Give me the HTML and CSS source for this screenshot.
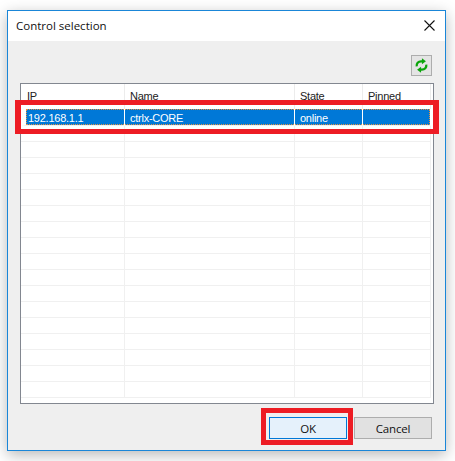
FILE: index.html
```html
<!DOCTYPE html>
<html lang="en">

<head>
  <meta charset="UTF-8">
  <title>Control selection</title>
  <link rel="stylesheet" href="styles.css">
</head>

<body>
  <div class="dialog">
    <div class="titlebar">
      <span class="title">Control selection</span>
      <svg class="close" width="11" height="11" viewBox="0 0 11 11">
        <path d="M0.5 0.5L10.5 10.5M10.5 0.5L0.5 10.5" stroke="#111" stroke-width="1.1" fill="none" />
      </svg>
    </div>
    <div class="content">
      <div class="toolbar">
        <button class="refresh">
          <svg width="13" height="15" viewBox="0 0 15 17">
            <path d="M2 9.5C1.4 6 3.8 3.6 7 3.6H9" stroke="#0aa50a" stroke-width="2.6" fill="none" />
            <path d="M8 0.2L12.6 3.7L8 7.2Z" fill="#0aa50a" />
            <path d="M13 7.5C13.6 11 11.2 13.4 8 13.4H6" stroke="#0aa50a" stroke-width="2.6" fill="none" />
            <path d="M7 9.8L2.4 13.3L7 16.8Z" fill="#0aa50a" />
          </svg>
        </button>
      </div>
      <div class="list">
        <div class="grid-clip">
          <table class="grid">
            <tr class="head">
              <th class="c1">IP</th>
              <th class="c2">Name</th>
              <th class="c3">State</th>
              <th class="c4">Pinned</th>
            </tr>
            <tr class="selected">
              <td>192.168.1.1</td>
              <td>ctrlx-CORE</td>
              <td>online</td>
              <td></td>
            </tr>
            <tr><td></td><td></td><td></td><td></td></tr>
            <tr><td></td><td></td><td></td><td></td></tr>
            <tr><td></td><td></td><td></td><td></td></tr>
            <tr><td></td><td></td><td></td><td></td></tr>
            <tr><td></td><td></td><td></td><td></td></tr>
            <tr><td></td><td></td><td></td><td></td></tr>
            <tr><td></td><td></td><td></td><td></td></tr>
            <tr><td></td><td></td><td></td><td></td></tr>
            <tr><td></td><td></td><td></td><td></td></tr>
            <tr><td></td><td></td><td></td><td></td></tr>
            <tr><td></td><td></td><td></td><td></td></tr>
            <tr><td></td><td></td><td></td><td></td></tr>
            <tr><td></td><td></td><td></td><td></td></tr>
            <tr><td></td><td></td><td></td><td></td></tr>
            <tr><td></td><td></td><td></td><td></td></tr>
            <tr><td></td><td></td><td></td><td></td></tr>
            <tr><td></td><td></td><td></td><td></td></tr>
          </table>
        </div>
        <div class="focus"></div>
        <div class="mark mark-row"></div>
      </div>
      <div class="actions">
        <button class="btn btn-ok">OK<span class="mark mark-ok"></span></button>
        <button class="btn">Cancel</button>
      </div>
    </div>
  </div>
</body>

</html>
```

FILE: styles.css
```css
* {
  box-sizing: border-box;
}

body {
  margin: 0;
  height: 461px;
  background: #fff;
  overflow: hidden;
  padding: 10px 0 0 7px;
}

.dialog {
  width: 439px;
  height: 441px;
  border: 1px solid #1a86d8;
  background: #efefef;
  box-shadow: 0 4px 14px rgba(0, 0, 0, 0.28);
  display: flex;
  flex-direction: column;
}

.titlebar {
  height: 30px;
  background: #fff;
  display: flex;
  align-items: center;
  justify-content: space-between;
  padding: 0 10px 2px 8px;
}

.title {
  font-family: "Open Sans", sans-serif;
  font-size: 11.5px;
  color: #111;
}

.content {
  flex: 1;
  padding: 14px 11px 0 12px;
}

.toolbar {
  display: flex;
  justify-content: flex-end;
  margin: 0 2px 7px 0;
}

.refresh {
  width: 21px;
  height: 21px;
  padding: 0;
  border: 1px solid #adadad;
  background: #e4e4e4;
  display: flex;
  align-items: center;
  justify-content: center;
}

.list {
  position: relative;
  width: 414px;
  height: 321px;
  border: 1px solid #828790;
  background: #fff;
}

.grid-clip {
  height: 318px;
  overflow: hidden;
}

.grid {
  border-collapse: separate;
  border-spacing: 0;
  table-layout: fixed;
  width: 410px;
  font-family: "Liberation Sans", sans-serif;
  font-size: 11px;
  letter-spacing: -0.25px;
  color: #222;
}

.grid th {
  height: 25px;
  padding: 6px 0 0 5px;
  font-weight: normal;
  text-align: left;
  vertical-align: top;
  border-right: 1px solid #ececec;
}

.grid th.c1 {
  padding-left: 6px;
}

.grid td {
  height: 16px;
  padding: 0 0 0 5px;
  border-right: 1px solid #f0f0f0;
  border-bottom: 1px solid #f0f0f0;
  white-space: nowrap;
}

.c1 {
  width: 104px;
}

.c2 {
  width: 170px;
}

.c3 {
  width: 68px;
}

.c4 {
  width: 68px;
}

.grid .selected td {
  height: 17px;
  padding-top: 1px;
  background: #0078d7;
  background-clip: padding-box;
  color: #fff;
  border-right-color: #fff;
}

.grid .selected td:first-child {
  border-left: 5px solid #fff;
  padding-left: 2px;
}

.focus {
  position: absolute;
  left: 5px;
  top: 25px;
  width: 404px;
  height: 16px;
  border: 1px dotted #e89240;
}

.mark {
  position: absolute;
  border: 5px solid #ed1c24;
  pointer-events: none;
}

.mark-row {
  left: -6px;
  top: 16px;
  width: 424px;
  height: 34px;
  border-width: 5px 6px;
}

.actions {
  display: flex;
  justify-content: flex-end;
  gap: 7px;
  margin: 13px 2px 0 0;
}

.btn {
  position: relative;
  width: 78px;
  height: 22px;
  padding: 0;
  border: 1px solid #adadad;
  background: #e1e1e1;
  font-family: "Open Sans", sans-serif;
  font-size: 11.5px;
  letter-spacing: -0.2px;
  color: #111;
}

.btn-ok {
  background: #e5f1fb;
  border-color: #0078d7;
}

.mark-ok {
  left: -9px;
  top: -10px;
  width: 92px;
  height: 37px;
}
```
